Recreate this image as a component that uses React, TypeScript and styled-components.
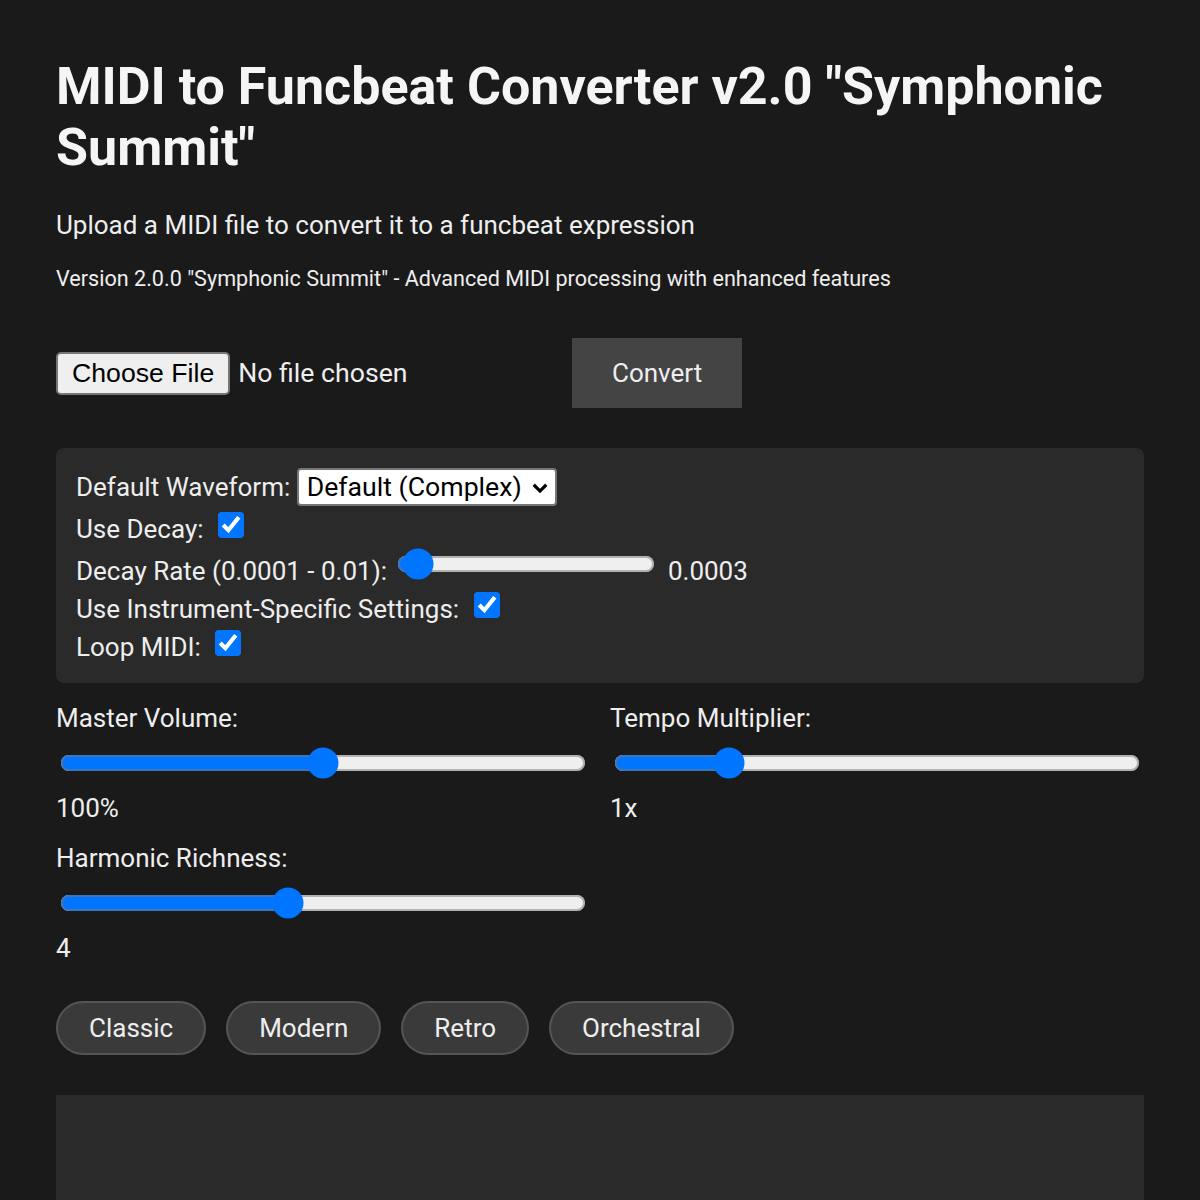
import React from "react";
import styled, { createGlobalStyle } from "styled-components";

const GlobalStyle = createGlobalStyle`
  html, body {
    margin: 0;
    padding: 0;
    background: #1a1a1a;
  }
  body {
    font-family: Roboto, "Noto Sans", "Liberation Sans", sans-serif;
    color: #eeeeee;
  }
`;

const Page = styled.div`
  zoom: 2;
  padding: 28px 28px 0;
  font-size: 13px;
`;

const Title = styled.h1`
  font-size: 26px;
  line-height: normal;
  font-weight: 700;
  margin: 0 0 16px;
  color: #f5f5f5;
`;

const Subtitle = styled.p`
  font-size: 13px;
  margin: 0 0 13px;
`;

const VersionNote = styled.p`
  font-size: 10.8px;
  margin: 0 0 23.5px;
`;

const UploadRow = styled.div`
  display: flex;
  align-items: center;
  gap: 3px;
  margin-bottom: 20px;
`;

const FileInput = styled.input`
  color: #eeeeee;
  font-family: Roboto, sans-serif;
`;

const ConvertButton = styled.button`
  background: #444444;
  color: #eeeeee;
  border: none;
  font-family: Roboto, sans-serif;
  font-size: 13px;
  padding: 10px 20px;
`;

const OptionsPanel = styled.div`
  background: #2a2a2a;
  border-radius: 4px;
  padding: 10px 10px 10.5px;
  margin-bottom: 10px;
`;

const OptionRow = styled.div`
  font-size: 13px;
`;

const SelectWrap = styled.span`
  position: relative;
  display: inline-block;
`;

const Select = styled.select`
  appearance: none;
  -webkit-appearance: none;
  font-family: Roboto, sans-serif;
  font-size: 13.33px;
  line-height: normal;
  color: #000000;
  background: #ffffff;
  border: 1px solid #767676;
  border-radius: 2px;
  padding: 0.5px 16px 0.5px 4px;
  margin: 0;
`;

const Chevron = styled.svg`
  position: absolute;
  right: 4px;
  top: 50%;
  width: 9px;
  height: 9px;
  margin-top: -4px;
  pointer-events: none;
`;

const ValueText = styled.span`
  margin-left: 1px;
`;

const SliderGrid = styled.div`
  display: grid;
  grid-template-columns: 1fr 1fr;
  column-gap: 10px;
  row-gap: 10px;
`;

const SliderGroup = styled.div`
  font-size: 13px;
`;

const SliderLabel = styled.label`
  display: block;
  margin-bottom: 5px;
`;

const WideRange = styled.input`
  width: calc(100% - 4px);
`;

const SliderValue = styled.div`
  margin-top: 4px;
`;

const PresetRow = styled.div`
  display: flex;
  gap: 10px;
  margin-top: 19px;
`;

const PresetButton = styled.button`
  background: #3a3a3a;
  color: #eeeeee;
  border: 1px solid #555555;
  border-radius: 14px;
  font-family: Roboto, sans-serif;
  font-size: 13px;
  padding: 5px 15.5px;
`;

const OutputPanel = styled.div`
  background: #2a2a2a;
  margin-top: 20px;
  height: 400px;
`;

export default function App() {
  return (
    <>
      <GlobalStyle />
      <Page>
        <Title>MIDI to Funcbeat Converter v2.0 "Symphonic Summit"</Title>
        <Subtitle>Upload a MIDI file to convert it to a funcbeat expression</Subtitle>
        <VersionNote>
          Version 2.0.0 "Symphonic Summit" - Advanced MIDI processing with enhanced features
        </VersionNote>
        <UploadRow>
          <FileInput type="file" accept=".mid,.midi" />
          <ConvertButton>Convert</ConvertButton>
        </UploadRow>
        <OptionsPanel>
          <OptionRow>
            <label>
              Default Waveform:{" "}
              <SelectWrap>
                <Select defaultValue="default">
                  <option value="default">Default (Complex)</option>
                  <option value="sine">Sine</option>
                  <option value="square">Square</option>
                </Select>
                <Chevron viewBox="0 0 10 10">
                  <path d="M1.5 3.2 L5 6.7 L8.5 3.2" fill="none" stroke="#000" strokeWidth="1.8" />
                </Chevron>
              </SelectWrap>
            </label>
          </OptionRow>
          <OptionRow>
            <label>
              Use Decay: <input type="checkbox" defaultChecked />
            </label>
          </OptionRow>
          <OptionRow>
            <label>
              Decay Rate (0.0001 - 0.01):{" "}
              <input type="range" min={0.0001} max={0.01} step={0.0001} defaultValue={0.0003} />
            </label>{" "}
            <ValueText>0.0003</ValueText>
          </OptionRow>
          <OptionRow>
            <label>
              Use Instrument-Specific Settings: <input type="checkbox" defaultChecked />
            </label>
          </OptionRow>
          <OptionRow>
            <label>
              Loop MIDI: <input type="checkbox" defaultChecked />
            </label>
          </OptionRow>
        </OptionsPanel>
        <SliderGrid>
          <SliderGroup>
            <SliderLabel>Master Volume:</SliderLabel>
            <WideRange type="range" min={0} max={200} defaultValue={100} />
            <SliderValue>100%</SliderValue>
          </SliderGroup>
          <SliderGroup>
            <SliderLabel>Tempo Multiplier:</SliderLabel>
            <WideRange type="range" min={0.5} max={3} step={0.1} defaultValue={1} />
            <SliderValue>1x</SliderValue>
          </SliderGroup>
          <SliderGroup>
            <SliderLabel>Harmonic Richness:</SliderLabel>
            <WideRange type="range" min={1} max={8} defaultValue={4} />
            <SliderValue>4</SliderValue>
          </SliderGroup>
        </SliderGrid>
        <PresetRow>
          <PresetButton>Classic</PresetButton>
          <PresetButton>Modern</PresetButton>
          <PresetButton>Retro</PresetButton>
          <PresetButton>Orchestral</PresetButton>
        </PresetRow>
        <OutputPanel />
      </Page>
    </>
  );
}
